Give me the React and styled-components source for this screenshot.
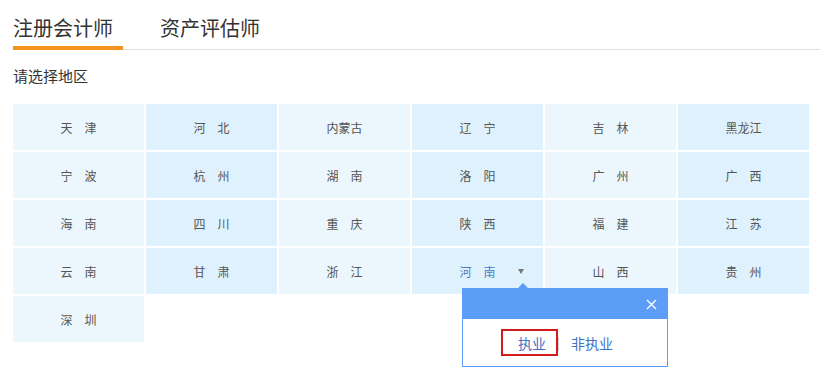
import React from "react";
import styled, { createGlobalStyle } from "styled-components";

const Global = createGlobalStyle`
  html, body { margin: 0; padding: 0; background: #fff; }
  body { font-family: "Noto Sans CJK SC", "Microsoft YaHei", sans-serif; }
`;

const Page = styled.div`
  padding: 0 15px 40px 13px;
  width: 807px;
  min-height: 334px;
`;

const Tabs = styled.div`
  display: flex;
  height: 49px;
  border-bottom: 1px solid #dcdfe3;
`;

const Tab = styled.div`
  box-sizing: border-box;
  width: ${(p) => p.$w}px;
  margin-right: ${(p) => p.$mr || 0}px;
  padding-top: 14px;
  height: 50px;
  font-size: 20px;
  line-height: 28px;
  color: #333;
  border-bottom: 4px solid ${(p) => (p.$active ? "#f7921e" : "transparent")};
  white-space: nowrap;
`;

const Label = styled.div`
  margin-top: 15px;
  font-size: 15px;
  line-height: 22px;
  color: #333;
`;

const Grid = styled.div`
  margin-top: 17px;
  display: grid;
  grid-template-columns: repeat(6, 131px);
  grid-auto-rows: 46px;
  gap: 2px;
`;

const Cell = styled.div`
  position: relative;
  display: flex;
  align-items: center;
  justify-content: center;
  background: ${(p) => (p.$dark ? "#dff1fd" : "#ebf7fd")};
  font-size: 12px;
  color: ${(p) => (p.$sel ? "#4a7cc4" : "#555")};
  z-index: ${(p) => (p.$sel ? 2 : "auto")};
`;

const Caret = styled.span`
  position: absolute;
  left: 106px;
  top: 21px;
  width: 0;
  height: 0;
  border-left: 3.5px solid transparent;
  border-right: 3.5px solid transparent;
  border-top: 5px solid #777;
`;

const Popup = styled.div`
  position: absolute;
  left: 50px;
  top: 40px;
  width: 206px;
  box-sizing: border-box;
  border: 1px solid #5b9df7;
  background: #fff;
  z-index: 2;
`;

const Arrow = styled.span`
  position: absolute;
  left: 54px;
  top: -6px;
  width: 0;
  height: 0;
  border-left: 6px solid transparent;
  border-right: 6px solid transparent;
  border-bottom: 6px solid #5b9df7;
`;

const PopHead = styled.div`
  height: 30px;
  background: #5b9df7;
  display: flex;
  align-items: center;
  justify-content: flex-end;
  padding-right: 10px;
`;

const PopBody = styled.div`
  height: 47px;
  display: flex;
  align-items: center;
  justify-content: flex-start;
  padding-left: 38px;
  font-size: 14px;
  color: #3f72c6;
`;

const Opt = styled.span`
  box-sizing: border-box;
  display: inline-flex;
  align-items: center;
  justify-content: center;
  height: 27px;
  padding: ${(p) => (p.$boxed ? "0 10px 0 15px" : "0")};
  border: ${(p) => (p.$boxed ? "2px solid #d41a1a" : "none")};
`;

const Sep = styled.span`
  width: 1px;
  height: 14px;
  background: #ccc;
  margin: 2px 12px 0 0;
`;

const rows = [
  ["天　津", "河　北", "内蒙古", "辽　宁", "吉　林", "黑龙江"],
  ["宁　波", "杭　州", "湖　南", "洛　阳", "广　州", "广　西"],
  ["海　南", "四　川", "重　庆", "陕　西", "福　建", "江　苏"],
  ["云　南", "甘　肃", "浙　江", "河　南", "山　西", "贵　州"],
  ["深　圳"],
];

export default function App() {
  return (
    <Page>
      <Global />
      <Tabs>
        <Tab $w={110} $mr={37} $active>注册会计师</Tab>
        <Tab $w={110}>资产评估师</Tab>
      </Tabs>
      <Label>请选择地区</Label>
      <Grid>
        {rows.flatMap((r, ri) =>
          r.map((name, ci) => {
            const sel = ri === 3 && ci === 3;
            return (
              <Cell key={ri + "-" + ci} $dark={ci % 2 === 1} $sel={sel}>
                {name}
                {sel && (
                  <>
                    <Caret />
                    <Popup>
                      <Arrow />
                      <PopHead>
                        <svg width="11" height="11" viewBox="0 0 11 11">
                          <path d="M1 1L10 10M10 1L1 10" stroke="#fff" strokeWidth="1.4" />
                        </svg>
                      </PopHead>
                      <PopBody>
                        <Opt $boxed>执业</Opt>
                        <Sep />
                        <Opt>非执业</Opt>
                      </PopBody>
                    </Popup>
                  </>
                )}
              </Cell>
            );
          })
        )}
      </Grid>
    </Page>
  );
}
